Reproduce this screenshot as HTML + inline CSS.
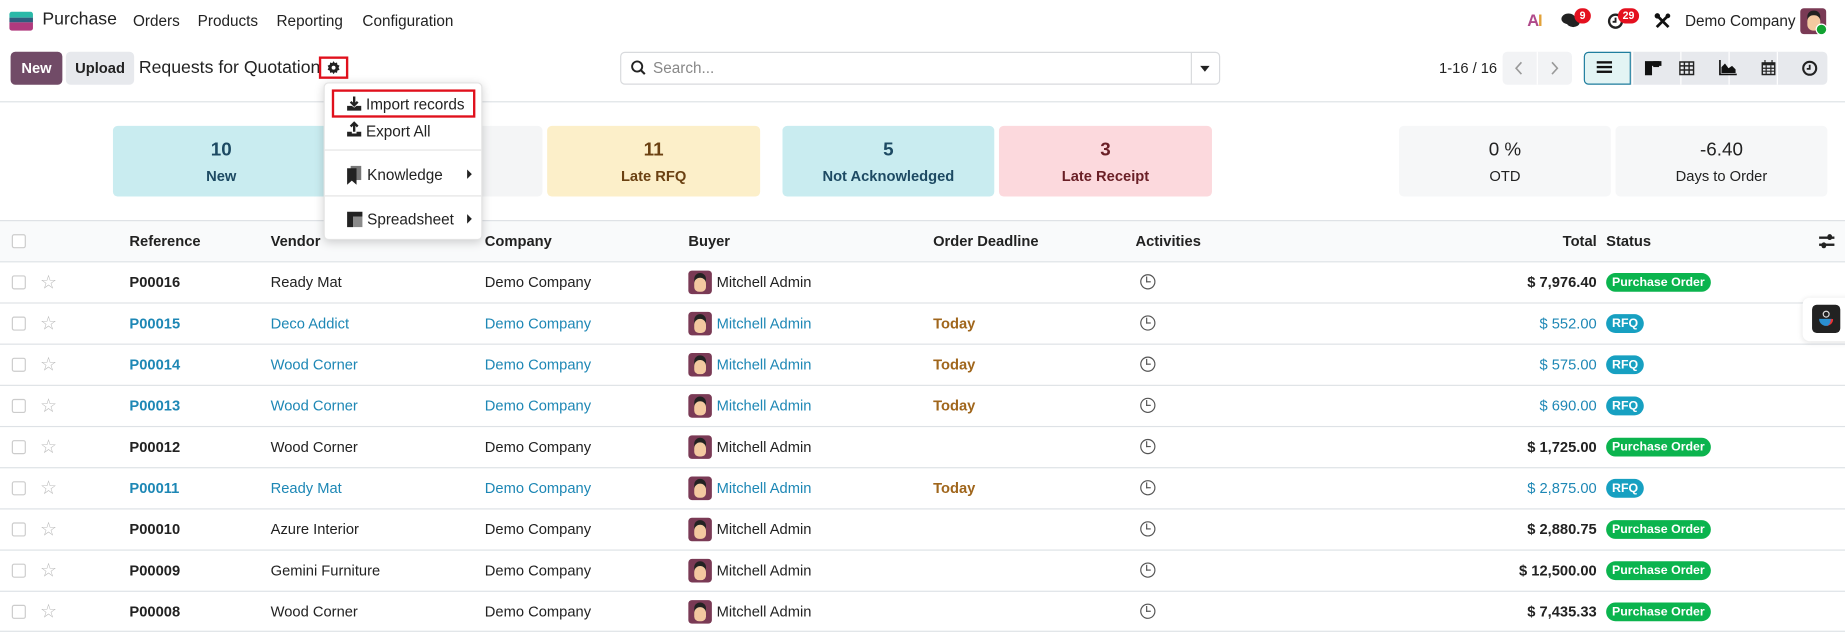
<!DOCTYPE html>
<html><head><meta charset="utf-8"><style>
*{box-sizing:border-box;margin:0;padding:0}
html,body{width:1845px;height:631px;overflow:hidden;background:#fff}
#w{position:absolute;left:0;top:0;width:1568px;height:537px;transform:scale(1.17666);transform-origin:0 0;font-family:"Liberation Sans",sans-serif;color:#222;font-size:12.5px}
.a{position:absolute;white-space:nowrap}
svg{position:absolute;overflow:visible}
.menu{top:10px;font-size:13px;color:#222}
.btn{position:absolute;top:44px;height:28px;border-radius:4px;font-weight:bold;font-size:12.5px;line-height:28px;text-align:center}
.card{position:absolute;top:107px;height:60px;border-radius:4px;text-align:center}
.card .n{font-size:16px;font-weight:bold;margin-top:12px}
.card .l{font-size:12.5px;font-weight:bold;margin-top:6px}
.row{position:absolute;left:0;width:1568px;height:35px;border-top:1px solid #dee2e6}
.row .a{top:10px}
.cb{position:absolute;left:10px;top:11px;width:12px;height:12px;border:1px solid #ccc;border-radius:2px;background:#fff}
.st{position:absolute;left:34px;top:7px;color:#bbb;font-size:16px}
.link{color:#1d87b5}
.b{font-weight:bold}
.av{position:absolute;left:585px;top:7px;width:20px;height:20px;border-radius:3px;background:#7a3a55;overflow:hidden}
.av:after{content:"";position:absolute;left:5px;top:6px;width:10px;height:12px;border-radius:5px 5px 4px 4px;background:#f3c9a0;box-shadow:0 -4px 0 0 #222}
.clk{position:absolute;left:969px;top:10px;width:13px;height:13px;border:1.8px solid #555;border-radius:50%}
.clk:after{content:"";position:absolute;left:3.5px;top:1px;width:3px;height:4px;border-left:1.5px solid #555;border-bottom:1.5px solid #555}
.bdg{position:absolute;left:1365px;top:9px;height:16px;line-height:16px;border-radius:8px;color:#fff;font-weight:bold;font-size:10.5px;padding:0 5px}
.po{background:#0bb44e}.rfq{background:#17a0c1}
.dd{position:absolute;left:275px;top:70px;width:135px;height:134px;background:#fff;border-radius:4px;box-shadow:0 2px 8px rgba(0,0,0,.18);border:1px solid #e3e3e3}
.dd .a{font-size:13px;color:#222}
</style></head><body><div id="w">
<!-- navbar -->
<div class="a" style="left:8px;top:10px;width:20px;height:5px;background:#2ab9a8;border-radius:2px 2px 0 0"></div>
<div class="a" style="left:8px;top:15px;width:20px;height:4px;background:#2f5d7e"></div>
<div class="a" style="left:8px;top:19px;width:20px;height:7px;background:#b03a7e;border-radius:0 0 2px 2px"></div>
<div class="a" style="left:36px;top:8px;font-size:15px;color:#222">Purchase</div>
<div class="a menu" style="left:113px">Orders</div>
<div class="a menu" style="left:168px">Products</div>
<div class="a menu" style="left:235px">Reporting</div>
<div class="a menu" style="left:308px">Configuration</div>
<div class="a" style="left:1298px;top:9px;font-weight:bold;font-size:14px;color:#b04a8a;letter-spacing:-1px">A<span style="color:#e2a23a">I</span></div>
<svg style="left:1327px;top:10px" width="16" height="16" viewBox="0 0 16 16"><ellipse cx="6" cy="6" rx="6" ry="4.5" fill="#222"/><ellipse cx="10" cy="9" rx="5.5" ry="4" fill="#222"/></svg>
<div class="a" style="left:1338px;top:7px;height:13px;min-width:14px;background:#e4101f;color:#fff;border-radius:7px;font-size:9px;font-weight:bold;line-height:13px;text-align:center;padding:0 3px">9</div>
<svg style="left:1366px;top:11px" width="14" height="14" viewBox="0 0 14 14"><circle cx="7" cy="7" r="5.5" fill="none" stroke="#222" stroke-width="2"/><path d="M7 4v3.5H4.5" fill="none" stroke="#222" stroke-width="1.6"/></svg>
<div class="a" style="left:1375px;top:7px;height:13px;background:#e4101f;color:#fff;border-radius:7px;font-size:9px;font-weight:bold;line-height:13px;padding:0 4px">29</div>
<svg style="left:1406px;top:11px" width="14" height="14" viewBox="0 0 14 14"><path d="M2 2l10 10M12 2L2 12" stroke="#111" stroke-width="2.4"/><circle cx="2.5" cy="2.5" r="2.3" fill="#111"/><circle cx="11.5" cy="2.5" r="2" fill="#111"/></svg>
<div class="a" style="left:1432px;top:10px;font-size:13px;color:#222">Demo Company</div>
<div class="a" style="left:1530px;top:7px;width:22px;height:22px;border-radius:3px;background:#7a3a55"><div style="position:absolute;left:6px;top:6px;width:11px;height:13px;border-radius:5px;background:#f3c9a0;box-shadow:0 -4px 0 #222"></div></div>
<div class="a" style="left:1543px;top:20px;width:10px;height:10px;border-radius:50%;background:#12a332;border:1px solid #fff"></div>
<!-- control bar -->
<div class="btn" style="left:9px;width:44px;background:#714b67;color:#fff">New</div>
<div class="btn" style="left:56px;width:58px;background:#e7e9ed;color:#222">Upload</div>
<div class="a" style="left:118px;top:49px;font-size:15px;color:#222">Requests for Quotation</div>
<div class="a" style="left:271px;top:48px;width:25px;height:19px;border:2px solid #e0101c"></div>
<svg style="left:278px;top:52px" width="11" height="11" viewBox="0 0 12 12"><path d="M6 0l1.2 1.8 2-.6.3 2.1 2 .8-.9 1.9.9 1.9-2 .8-.3 2.1-2-.6L6 12l-1.2-1.8-2 .6-.3-2.1-2-.8.9-1.9L.5 4.1l2-.8.3-2.1 2 .6z" fill="#222"/><circle cx="6" cy="6" r="1.8" fill="#fff"/></svg>
<div class="a" style="left:527px;top:44px;width:510px;height:28px;border:1px solid #d8dadd;border-radius:4px"></div>
<div class="a" style="left:1012px;top:45px;width:1px;height:26px;background:#d8dadd"></div>
<svg style="left:536px;top:51px" width="13" height="13" viewBox="0 0 13 13"><circle cx="5.5" cy="5.5" r="4.3" fill="none" stroke="#222" stroke-width="1.6"/><path d="M8.5 8.5l3.5 3.5" stroke="#222" stroke-width="1.8"/></svg>
<div class="a" style="left:555px;top:50px;font-size:13px;color:#888">Search...</div>
<div class="a" style="left:1020px;top:56px;border-left:4px solid transparent;border-right:4px solid transparent;border-top:5px solid #222"></div>
<div class="a" style="left:1223px;top:51px;font-size:12.5px;color:#222">1-16 / 16</div>
<div class="a" style="left:1277px;top:44px;width:59px;height:28px;background:#f2f3f5;border-radius:4px"></div>
<div class="a" style="left:1306px;top:44px;width:1px;height:28px;background:#fff"></div>
<svg style="left:1287px;top:52px" width="8" height="12"><path d="M6 1L1.5 6 6 11" fill="none" stroke="#999" stroke-width="1.4"/></svg>
<svg style="left:1317px;top:52px" width="8" height="12"><path d="M2 1l4.5 5L2 11" fill="none" stroke="#999" stroke-width="1.4"/></svg>
<div class="a" style="left:1346px;top:44px;width:207px;height:28px;background:#e7e9ed;border-radius:4px"></div>
<div class="a" style="left:1346px;top:44px;width:40px;height:28px;background:#e3f4f4;border:1px solid #1f7e9e;border-radius:4px 0 0 4px"></div>
<div class="a" style="left:1357px;top:52px;width:13px;height:10px;border-top:2px solid #111;border-bottom:2px solid #111"></div>
<div class="a" style="left:1357px;top:56px;width:13px;height:2px;background:#111"></div>
<div class="a" style="left:1387px;top:44px;width:1px;height:28px;background:#fff"></div>
<div class="a" style="left:1428px;top:44px;width:1px;height:28px;background:#fff"></div>
<div class="a" style="left:1469px;top:44px;width:1px;height:28px;background:#fff"></div>
<div class="a" style="left:1510px;top:44px;width:1px;height:28px;background:#fff"></div>
<svg style="left:1398px;top:52px" width="14" height="12"><path d="M0 0h14v4H6v8H0z" fill="#111"/><rect x="7" y="0" width="5" height="5" fill="#111"/></svg>
<svg style="left:1427px;top:52px" width="13" height="12"><path d="M.7.7h11.6v10.6H.7zM.7 4h11.6M.7 7.5h11.6M4.5.7v10.6M8.5.7v10.6" fill="none" stroke="#222" stroke-width="1.2"/></svg>
<svg style="left:1461px;top:51px" width="15" height="13"><path d="M.7 0v12.3H15" fill="none" stroke="#111" stroke-width="1.4"/><path d="M2 11V6l3-3 3 4 3-2 3 3v3z" fill="#111"/></svg>
<svg style="left:1497px;top:51px" width="12" height="13"><path d="M.7 2.5h10.6v9.8H.7z" fill="none" stroke="#222" stroke-width="1.2"/><rect x=".7" y="2" width="10.6" height="2.5" fill="#222"/><path d="M3 0v3M9 0v3M.7 7h10.6M.7 9.5h10.6M4 4.5v8M8 4.5v8" stroke="#222" stroke-width="1"/></svg>
<svg style="left:1531px;top:51px" width="14" height="14" viewBox="0 0 14 14"><circle cx="7" cy="7" r="5.5" fill="none" stroke="#222" stroke-width="1.8"/><path d="M7 4v3.5H4.5" fill="none" stroke="#222" stroke-width="1.5"/></svg>
<div class="a" style="left:0;top:86px;width:1568px;height:1px;background:#dee2e6"></div>
<!-- cards -->
<div class="card" style="left:96px;width:184px;background:#c9ecf0;color:#1d4a63"><div class="n">10</div><div class="l">New</div></div>
<div class="card" style="left:282px;width:179px;background:#f4f5f6"></div>
<div class="card" style="left:465px;width:181px;background:#fcefc9;color:#6b4112"><div class="n">11</div><div class="l">Late RFQ</div></div>
<div class="card" style="left:665px;width:180px;background:#c9ecf0;color:#1d4a63"><div class="n">5</div><div class="l">Not Acknowledged</div></div>
<div class="card" style="left:849px;width:181px;background:#fcd9dd;color:#6a1f26"><div class="n">3</div><div class="l">Late Receipt</div></div>
<div class="card" style="left:1189px;width:180px;background:#f6f7f8;color:#222"><div class="n" style="font-weight:normal">0 %</div><div class="l" style="font-weight:normal">OTD</div></div>
<div class="card" style="left:1373px;width:180px;background:#f6f7f8;color:#222"><div class="n" style="font-weight:normal">-6.40</div><div class="l" style="font-weight:normal">Days to Order</div></div>
<!-- table header -->
<div class="row" style="top:187px;background:#f9fafb;height:35px">
<div class="cb"></div>
<div class="a b" style="left:110px">Reference</div><div class="a b" style="left:230px">Vendor</div><div class="a b" style="left:412px">Company</div><div class="a b" style="left:585px">Buyer</div><div class="a b" style="left:793px">Order Deadline</div><div class="a b" style="left:965px">Activities</div><div class="a b" style="right:211px">Total</div><div class="a b" style="left:1365px">Status</div>
<div class="a" style="left:1546px;top:13px;width:13px;height:2px;background:#222"></div><div class="a" style="left:1546px;top:19px;width:13px;height:2px;background:#222"></div>
<div class="a" style="left:1553px;top:11px;width:4px;height:5px;background:#222;border-radius:2px"></div><div class="a" style="left:1548px;top:18px;width:4px;height:5px;background:#222;border-radius:2px"></div>
</div>
<div class="row" style="top:222px"><div class="cb"></div><div class="st">☆</div><div class="a b" style="left:110px">P00016</div><div class="a" style="left:230px">Ready Mat</div><div class="a" style="left:412px">Demo Company</div><div class="av"></div><div class="a" style="left:609px">Mitchell Admin</div><div class="clk"></div><div class="a b" style="right:211px">$ 7,976.40</div><div class="bdg po">Purchase Order</div></div>
<div class="row link" style="top:257px"><div class="cb"></div><div class="st">☆</div><div class="a b" style="left:110px">P00015</div><div class="a" style="left:230px">Deco Addict</div><div class="a" style="left:412px">Demo Company</div><div class="av"></div><div class="a" style="left:609px">Mitchell Admin</div><div class="a b" style="left:793px;color:#a0661c">Today</div><div class="clk"></div><div class="a" style="right:211px">$ 552.00</div><div class="bdg rfq">RFQ</div></div>
<div class="row link" style="top:292px"><div class="cb"></div><div class="st">☆</div><div class="a b" style="left:110px">P00014</div><div class="a" style="left:230px">Wood Corner</div><div class="a" style="left:412px">Demo Company</div><div class="av"></div><div class="a" style="left:609px">Mitchell Admin</div><div class="a b" style="left:793px;color:#a0661c">Today</div><div class="clk"></div><div class="a" style="right:211px">$ 575.00</div><div class="bdg rfq">RFQ</div></div>
<div class="row link" style="top:327px"><div class="cb"></div><div class="st">☆</div><div class="a b" style="left:110px">P00013</div><div class="a" style="left:230px">Wood Corner</div><div class="a" style="left:412px">Demo Company</div><div class="av"></div><div class="a" style="left:609px">Mitchell Admin</div><div class="a b" style="left:793px;color:#a0661c">Today</div><div class="clk"></div><div class="a" style="right:211px">$ 690.00</div><div class="bdg rfq">RFQ</div></div>
<div class="row" style="top:362px"><div class="cb"></div><div class="st">☆</div><div class="a b" style="left:110px">P00012</div><div class="a" style="left:230px">Wood Corner</div><div class="a" style="left:412px">Demo Company</div><div class="av"></div><div class="a" style="left:609px">Mitchell Admin</div><div class="clk"></div><div class="a b" style="right:211px">$ 1,725.00</div><div class="bdg po">Purchase Order</div></div>
<div class="row link" style="top:397px"><div class="cb"></div><div class="st">☆</div><div class="a b" style="left:110px">P00011</div><div class="a" style="left:230px">Ready Mat</div><div class="a" style="left:412px">Demo Company</div><div class="av"></div><div class="a" style="left:609px">Mitchell Admin</div><div class="a b" style="left:793px;color:#a0661c">Today</div><div class="clk"></div><div class="a" style="right:211px">$ 2,875.00</div><div class="bdg rfq">RFQ</div></div>
<div class="row" style="top:432px"><div class="cb"></div><div class="st">☆</div><div class="a b" style="left:110px">P00010</div><div class="a" style="left:230px">Azure Interior</div><div class="a" style="left:412px">Demo Company</div><div class="av"></div><div class="a" style="left:609px">Mitchell Admin</div><div class="clk"></div><div class="a b" style="right:211px">$ 2,880.75</div><div class="bdg po">Purchase Order</div></div>
<div class="row" style="top:467px"><div class="cb"></div><div class="st">☆</div><div class="a b" style="left:110px">P00009</div><div class="a" style="left:230px">Gemini Furniture</div><div class="a" style="left:412px">Demo Company</div><div class="av"></div><div class="a" style="left:609px">Mitchell Admin</div><div class="clk"></div><div class="a b" style="right:211px">$ 12,500.00</div><div class="bdg po">Purchase Order</div></div>
<div class="row" style="top:502px;border-bottom:1px solid #dee2e6"><div class="cb"></div><div class="st">☆</div><div class="a b" style="left:110px">P00008</div><div class="a" style="left:230px">Wood Corner</div><div class="a" style="left:412px">Demo Company</div><div class="av"></div><div class="a" style="left:609px">Mitchell Admin</div><div class="clk"></div><div class="a b" style="right:211px">$ 7,435.33</div><div class="bdg po">Purchase Order</div></div>
<!-- floating -->
<div class="a" style="left:1532px;top:253px;width:40px;height:37px;background:#fff;border-radius:6px 0 0 6px;box-shadow:0 1px 5px rgba(0,0,0,.12)"></div>
<div class="a" style="left:1540px;top:259px;width:24px;height:24px;background:#222;border-radius:4px"><div style="position:absolute;left:6px;top:12px;width:12px;height:6px;background:#2a8fd0;border-radius:0 0 6px 6px;border-right:2px solid #e33"></div><div style="position:absolute;left:9px;top:5px;width:6px;height:6px;border-radius:50%;border:1px solid #ddd"></div></div>
<!-- dropdown -->
<div class="dd">
<div class="a" style="left:6px;top:5px;width:122px;height:24px;border:2px solid #e0101c"></div>
<svg style="left:19px;top:11px" width="12" height="12" viewBox="0 0 12 12"><path d="M6 0v7M3 4.5L6 7.5 9 4.5" fill="none" stroke="#222" stroke-width="2"/><path d="M0 8h4l2 1.5L8 8h4v4H0z" fill="#222"/></svg>
<div class="a" style="left:35px;top:10px">Import records</div>
<svg style="left:19px;top:33px" width="12" height="12" viewBox="0 0 12 12"><path d="M6 8V1M3 3.5L6 .5 9 3.5" fill="none" stroke="#222" stroke-width="2"/><path d="M0 8h4v1.5h4V8h4v4H0z" fill="#222"/></svg>
<div class="a" style="left:35px;top:33px">Export All</div>
<div class="a" style="left:0;top:56px;width:133px;height:1px;background:#e3e3e3"></div>
<svg style="left:19px;top:70px" width="12" height="16" viewBox="0 0 12 16"><path d="M3 0h9v12H3z" fill="#777"/><path d="M0 2h8v14L4 12.5 0 16z" fill="#222"/></svg>
<div class="a" style="left:36px;top:70px">Knowledge</div>
<div class="a" style="left:121px;top:73px;border-top:4px solid transparent;border-bottom:4px solid transparent;border-left:4px solid #222"></div>
<div class="a" style="left:0;top:95px;width:133px;height:1px;background:#e3e3e3"></div>
<svg style="left:19px;top:109px" width="13" height="13" viewBox="0 0 13 13"><path d="M0 0h13v4H5v9H0z" fill="#222"/><rect x="5" y="4" width="8" height="9" fill="#8a8a8a"/></svg>
<div class="a" style="left:36px;top:108px">Spreadsheet</div>
<div class="a" style="left:121px;top:111px;border-top:4px solid transparent;border-bottom:4px solid transparent;border-left:4px solid #222"></div>
</div>
</div></body></html>
